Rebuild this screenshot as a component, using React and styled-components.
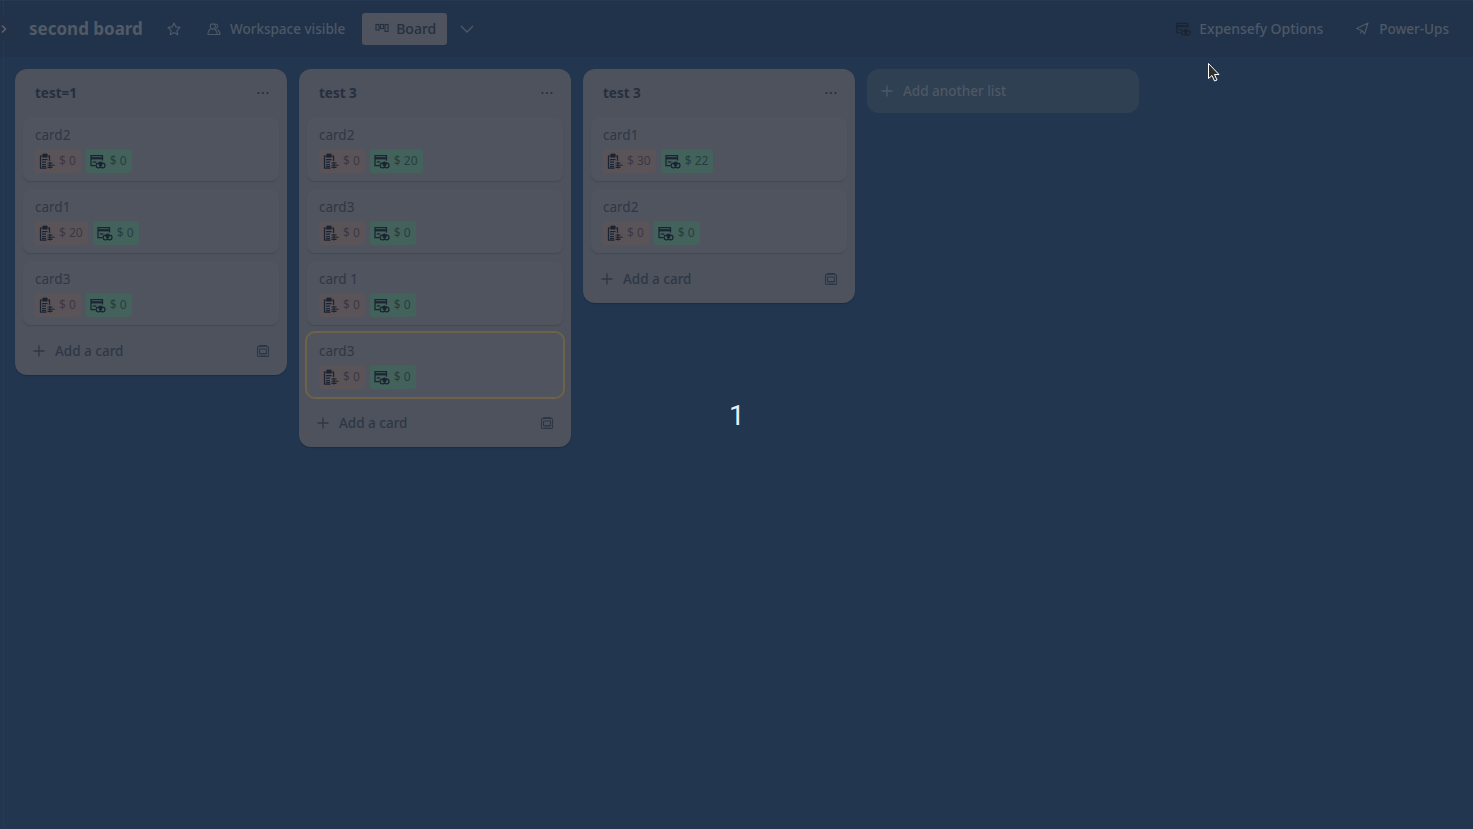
import React from "react";
import styled, { createGlobalStyle } from "styled-components";

const Global = createGlobalStyle`
  html, body { margin: 0; padding: 0; height: 100%; overflow: hidden; background: #22364f; }
  #root { height: 100%; }
  * { box-sizing: border-box; }
`;

const Page = styled.div`
  position: relative;
  width: 1473px;
  height: 829px;
  background: #22364f;
  font-family: "Noto Sans", "Open Sans", sans-serif;
  overflow: hidden;
  &::before {
    content: "";
    position: absolute;
    left: 3px;
    top: 0;
    bottom: 0;
    border-left: 1px dotted #2b3e57;
  }
`;
const Header = styled.header`
  height: 57px;
  background: #21334a;
  display: flex;
  align-items: center;
  padding: 0 24px 0 29px;
  color: #4e5866;
  border-top: 1px dotted #2c3e55;
`;
const Toggle = styled.div`
  position: absolute;
  left: -8px;
  top: 17px;
  width: 23px;
  height: 23px;
  border-radius: 50%;
  background: #233249;
  color: #59626f;
  display: flex;
  align-items: center;
  justify-content: flex-end;
  padding-right: 7px;
`;
const Title = styled.h1`
  margin: 0;
  font-size: 17px;
  line-height: 24px;
  font-weight: 700;
  color: #525a66;
  width: 114px;
  white-space: nowrap;
`;
const IconBtn = styled.span`
  display: inline-flex;
  color: #4e5866;
  margin-left: ${(p) => p.$ml || 0}px;
`;
const Label = styled.span`
  padding-bottom: ${(p) => p.$pb || 0}px;
  letter-spacing: ${(p) => p.$ls || 0}px;
`;
const HeadItem = styled.div`
  display: flex;
  align-items: center;
  gap: ${(p) => p.$gap || 8}px;
  margin-left: ${(p) => p.$ml || 0}px;
  font-size: ${(p) => p.$fs || 13.5}px;
  font-weight: 500;
  color: #4e5866;
  white-space: nowrap;
`;
const BoardBtn = styled.div`
  display: flex;
  align-items: center;
  gap: 7px;
  width: 85px;
  height: 32px;
  margin-left: 17px;
  padding-left: 13px;
  background: #4e535d;
  border-radius: 3px;
  color: #262f3e;
  font-size: 14px;
  font-weight: 500;
`;
const Spacer = styled.div`
  flex: 1;
`;
const Board = styled.main`
  display: flex;
  align-items: flex-start;
  gap: 12px;
  padding: 12px 15px;
`;
const List = styled.section`
  width: 272px;
  background: #4d525c;
  border-radius: 12px;
  padding-bottom: 6px;
  box-shadow: 0 1px 1px #1d2c41;
`;
const ListHead = styled.div`
  height: 48px;
  display: flex;
  align-items: center;
  justify-content: space-between;
  padding: 0 17px 0 20px;
  color: #262f3e;
  font-size: 13.5px;
  font-weight: 700;
`;
const Cards = styled.div`
  display: flex;
  flex-direction: column;
  gap: 8px;
  padding: 0 8px;
`;
const Card = styled.article`
  position: relative;
  height: 64px;
  background: #50545e;
  border-radius: 8px;
  box-shadow: 0 1px 1px #444954;
  padding: 10px 12px 0;
  color: #2e3746;
  font-size: 13.5px;
  line-height: 16px;
  ${(p) => p.$active && `outline: 2px solid #6e6249; box-shadow: none;`}
`;
const Badges = styled.div`
  display: flex;
  gap: 5px;
  margin-top: 6px;
`;
const Badge = styled.span`
  display: inline-flex;
  align-items: center;
  gap: 4px;
  height: 24px;
  padding: 0 5px 0 4px;
  border-radius: 3px;
  font-size: 12px;
  background: ${(p) => (p.$green ? "#44625c" : "#5a5458")};
  color: ${(p) => (p.$green ? "#243e3f" : "#3a3844")};
`;
const Ink = styled.span`
  display: inline-flex;
  color: #1b2432;
`;
const Foot = styled.div`
  height: 36px;
  margin-top: 8px;
  display: flex;
  align-items: center;
  justify-content: space-between;
  padding: 0 17px 0 16px;
  color: #2e3746;
  font-size: 13.5px;
  font-weight: 500;
`;
const FootLeft = styled.span`
  display: flex;
  align-items: center;
  gap: 8px;
`;
const AddList = styled.div`
  width: 272px;
  height: 44px;
  background: #2f4053;
  border-radius: 12px;
  display: flex;
  align-items: center;
  gap: 8px;
  padding: 0 12px;
  color: #4e5866;
  font-size: 13.5px;
  font-weight: 500;
`;
const Counter = styled.div`
  position: absolute;
  left: 729px;
  top: 399px;
  font-family: Roboto, sans-serif;
  font-size: 28px;
  line-height: 34px;
  color: #e6f0fa;
`;
const Cursor = styled.svg`
  position: absolute;
  left: 1207px;
  top: 62px;
`;

const Plus = () => (
  <svg width="16" height="16" viewBox="0 0 16 16" fill="none" stroke="currentColor" strokeWidth="1.4">
    <path d="M8 2.5v11M2.5 8h11" />
  </svg>
);
const Dots = () => (
  <svg width="14" height="14" viewBox="0 0 14 14" fill="currentColor">
    <circle cx="2.5" cy="7" r="1.1" /><circle cx="7" cy="7" r="1.1" /><circle cx="11.5" cy="7" r="1.1" />
  </svg>
);
const Template = () => (
  <svg width="14" height="14" viewBox="0 0 14 14" fill="none" stroke="currentColor" strokeWidth="1.1">
    <path d="M3 1.5h8M1.5 3.5v8a1 1 0 0 0 1 1h9a1 1 0 0 0 1-1v-8a1 1 0 0 0-1-1h-9a1 1 0 0 0-1 1z" />
    <path d="M3.5 5h7v4.5h-7zM3.5 11h7" />
  </svg>
);
const ExpenseIcon = () => (
  <svg width="16" height="16" viewBox="0 0 16 16" fill="none" stroke="currentColor" strokeWidth="1.25">
    <path d="M3.5 3H1.5v12h6M9 3h1.5v5" />
    <path d="M3.8 1h4.4v3.2H3.8z" fill="currentColor" strokeWidth=".7" />
    <path d="M3 6.5h5.5M3 9h4M3 11.5h4M3 13.5h4" />
    <path d="M8.5 10h5M8.5 12.2h7M8.5 14.4h5M11 9v6.5" strokeWidth="1.15" />
  </svg>
);
const CardIcon = ({ size = 16 }) => (
  <svg width={size} height={(size * 15) / 16} viewBox="0 0 16 15" fill="none" stroke="currentColor" strokeWidth="1.25">
    <path d="M5.5 11.5H1v-10h11.5v5" />
    <path d="M1 4.3h11.5" strokeWidth="2.2" />
    <path d="M2.8 8h3.5" />
    <circle cx="8.5" cy="11.5" r="2.4" />
    <circle cx="12.6" cy="11.5" r="2.4" />
    <circle cx="10.5" cy="9.8" r="1.6" fill="currentColor" />
  </svg>
);
const Money = ({ exp, paid }) => (
  <Badges>
    <Badge>
      <Ink><ExpenseIcon /></Ink>$ {exp}
    </Badge>
    <Badge $green>
      <Ink><CardIcon /></Ink>$ {paid}
    </Badge>
  </Badges>
);

const data = [
  { title: "test=1", cards: [["card2", 0, 0], ["card1", 20, 0], ["card3", 0, 0]] },
  { title: "test 3", cards: [["card2", 0, 20], ["card3", 0, 0], ["card 1", 0, 0], ["card3", 0, 0, true]] },
  { title: "test 3", cards: [["card1", 30, 22], ["card2", 0, 0]] },
];

export default function App() {
  return (
    <Page>
      <Global />
      <Header>
        <Toggle>
          <svg width="8" height="10" viewBox="0 0 8 10" fill="none" stroke="currentColor" strokeWidth="1.6">
            <path d="M2 1.5 5.5 5 2 8.5" />
          </svg>
        </Toggle>
        <Title>second board</Title>
        <IconBtn $ml={23}>
          <svg width="16" height="16" viewBox="0 0 24 24" fill="none" stroke="currentColor" strokeWidth="1.8" strokeLinejoin="round">
            <path d="m12 3 2.7 5.9 6.3.8-4.6 4.4 1.2 6.4L12 17.4l-5.6 3.1 1.2-6.4L3 9.7l6.3-.8z" />
          </svg>
        </IconBtn>
        <HeadItem $ml={25} $gap={9}>
          <svg width="14" height="14" viewBox="0 0 14 14" fill="none" stroke="currentColor" strokeWidth="1.1">
            <circle cx="5.8" cy="4.5" r="2.6" />
            <path d="M8 2a2.3 2.3 0 0 1 2.5 3.2c-.3.7-.9 1.1-1.5 1.3" />
            <path d="M3.5 7C2 8 1 10 1 12.5h9c0-2.5-1-4.5-2.5-5.5M10.5 8c1.5.7 2.5 2.2 2.5 4.5h-3" />
          </svg>
          <Label>Workspace visible</Label>
        </HeadItem>
        <BoardBtn>
          <svg width="14" height="14" viewBox="0 0 14 14" fill="none" stroke="currentColor" strokeWidth="1.1">
            <rect x="1" y="2.5" width="3" height="5.5" />
            <rect x="5.5" y="2.5" width="3" height="4" />
            <rect x="10" y="2.5" width="3" height="7" />
          </svg>
          <Label $pb={2}>Board</Label>
        </BoardBtn>
        <IconBtn $ml={12}>
          <svg width="16" height="16" viewBox="0 0 16 16" fill="none" stroke="currentColor" strokeWidth="1.3">
            <path d="M2 5l6 6 6-6" />
          </svg>
        </IconBtn>
        <Spacer />
        <HeadItem $gap={8} $fs={14}>
          <Ink><CardIcon size={15} /></Ink>
          <Label $pb={2} $ls={-0.05}>Expensefy Options</Label>
        </HeadItem>
        <HeadItem $ml={31} $gap={9}>
          <svg width="16" height="16" viewBox="0 0 16 16" fill="none" stroke="currentColor" strokeWidth="1.2" strokeLinejoin="round">
            <path d="M14 2 10.5 13 8 9.5 2.5 7.5zM8 9.5l-2 3" />
          </svg>
          <Label>Power-Ups</Label>
        </HeadItem>
      </Header>
      <Board>
        {data.map((l, i) => (
          <List key={i}>
            <ListHead>
              <Label>{l.title}</Label>
              <Dots />
            </ListHead>
            <Cards>
              {l.cards.map((c, j) => (
                <Card key={j} $active={c[3]}>
                  {c[0]}
                  <Money exp={c[1]} paid={c[2]} />
                </Card>
              ))}
            </Cards>
            <Foot>
              <FootLeft><Plus />Add a card</FootLeft>
              <Template />
            </Foot>
          </List>
        ))}
        <AddList><Plus /><Label>Add another list</Label></AddList>
      </Board>
      <Counter>1</Counter>
      <Cursor width="14" height="22" viewBox="0 0 14 22">
        <path d="M1.5 1.5v15l3.5-3 2.5 5.5 2.5-1-2.5-5.5h4.5z" fill="#2e2e2e" stroke="#fff" strokeWidth="1" />
      </Cursor>
    </Page>
  );
}
